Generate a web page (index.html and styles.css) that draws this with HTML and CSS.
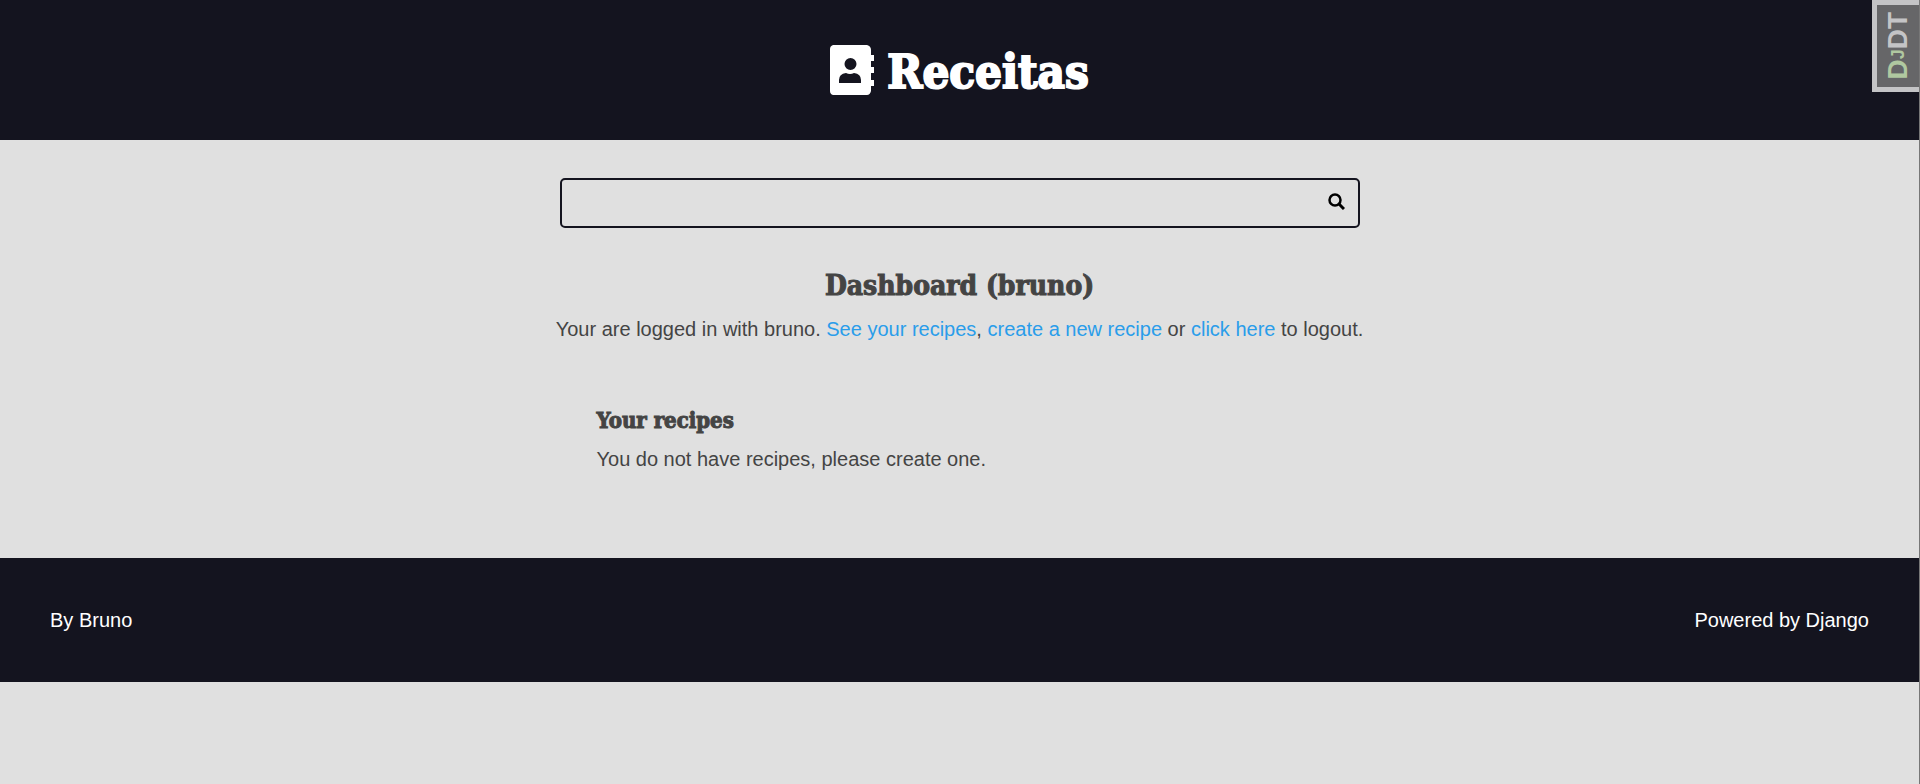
FILE: index.html
```html
<!DOCTYPE html>
<html lang="en">
<head>
<meta charset="utf-8">
<meta name="viewport" content="width=device-width, initial-scale=1">
<title>Receitas</title>
<link rel="stylesheet" href="styles.css">
</head>
<body>
<header class="main-header">
  <h1>
    <a class="logo" href="#">
      <svg class="logo-icon" viewBox="0 0 44 50" aria-hidden="true">
        <path fill="currentColor" fill-rule="evenodd" d="M3 0H37Q41 1 41 5V10H44V16H41V22H44V28H41V35H44V41H41V46Q40 50 37 50H3Q0 49 0 46V4Q0 1 3 0ZM20.500 13A6 6 0 1 0 20.500 25A6 6 0 1 0 20.500 13ZM16 28Q9 29 9 35V38H31V35Q31 29 24 28Q20 30 16 28Z"/>
      </svg>
      <span class="logo-text">Receitas</span>
    </a>
  </h1>
</header>
<main class="main-content">
  <form class="search-form">
    <input class="search-input" type="search" aria-label="Search">
    <button class="search-button" type="button" aria-label="Search">
      <svg class="search-icon" viewBox="0 0 17 17" aria-hidden="true">
        <circle cx="7" cy="7" r="5.500" fill="none" stroke="currentColor" stroke-width="2.500"/>
        <path d="M11 11L16 16" stroke="currentColor" stroke-width="3"/>
      </svg>
    </button>
  </form>
  <section class="intro">
    <h2>Dashboard (bruno)</h2>
    <p>Your are logged in with bruno. <a href="#">See your recipes</a>, <a href="#">create a new recipe</a> or <a href="#">click here</a> to logout.</p>
  </section>
  <section class="recipes">
    <h3>Your recipes</h3>
    <p>You do not have recipes, please create one.</p>
  </section>
</main>
<footer class="main-footer">
  <p>By Bruno</p>
  <p>Powered by Django</p>
</footer>
<button class="debug-handle" type="button" aria-label="Show toolbar"><span class="debug-label"><span class="debug-brand">D<small>J</small></span>DT</span></button>
</body>
</html>
```
FILE: styles.css
```css
:root {
  --dark: #14141f;
  --light: #e0e0e0;
  --text: #444444;
  --link: #2a9dea;
  --slab: "DejaVu Serif Condensed", "DejaVu Serif", serif;
}

* {
  box-sizing: border-box;
  margin: 0;
  padding: 0;
}

body {
  position: relative;
  min-height: 100vh;
  border-right: 1px solid #777777;
  background: var(--light);
  color: var(--text);
  font: 20px/30px "Liberation Sans", Arial, sans-serif;
}

h1,
h2,
h3 {
  font-family: var(--slab);
  font-weight: 700;
  -webkit-text-stroke: 1px currentColor;
}

a {
  color: var(--link);
  text-decoration: none;
}

.main-header {
  display: flex;
  justify-content: center;
  padding: 40px;
  background: var(--dark);
}

.main-header h1 {
  font-size: 47px;
  line-height: 60px;
}

.logo {
  display: flex;
  align-items: center;
  gap: 13px;
  height: 60px;
  color: #ffffff;
}

.logo-icon {
  width: 44px;
  height: 50px;
}

.logo-text {
  padding-top: 4px;
  -webkit-text-stroke: 2px currentColor;
}

.main-content {
  padding: 38px 20px 84px;
}

.search-form {
  display: flex;
  max-width: 800px;
  height: 50px;
  margin: 0 auto 38px;
  border: 2px solid var(--dark);
  border-radius: 5px;
}

.search-input {
  flex: 1;
  min-width: 0;
  padding: 0 16px;
  border: 0;
  outline: 0;
  background: transparent;
  font: inherit;
  appearance: none;
}

.search-button {
  display: flex;
  align-items: center;
  justify-content: center;
  width: 42px;
  padding-bottom: 4px;
  border: 0;
  background: transparent;
  color: #000000;
}

.search-icon {
  width: 17px;
  height: 17px;
}

.intro {
  margin-bottom: 60px;
  text-align: center;
}

.intro h2 {
  margin-bottom: 8px;
  font-size: 28px;
  line-height: 40px;
}

.recipes {
  max-width: 800px;
  margin: 0 auto;
  padding: 0 37px;
}

.recipes h3 {
  margin-bottom: 8px;
  font-size: 22px;
  line-height: 32px;
}

.main-footer {
  display: flex;
  justify-content: space-between;
  padding: 47px 50px;
  background: var(--dark);
  color: #ffffff;
}

.debug-handle {
  position: absolute;
  top: 0;
  right: 0;
  display: flex;
  align-items: center;
  justify-content: center;
  width: 47px;
  height: 92px;
  border: 5px solid #c4c4c6;
  border-right: 0;
  background: #666668;
  color: #c4c4c6;
  font: bold 28px/40px "Liberation Sans", Arial, sans-serif;
}

.debug-label {
  writing-mode: vertical-rl;
  transform: rotate(180deg);
}

.debug-brand {
  color: #b0c8a0;
}

.debug-brand small {
  font-size: 18px;
}
```
